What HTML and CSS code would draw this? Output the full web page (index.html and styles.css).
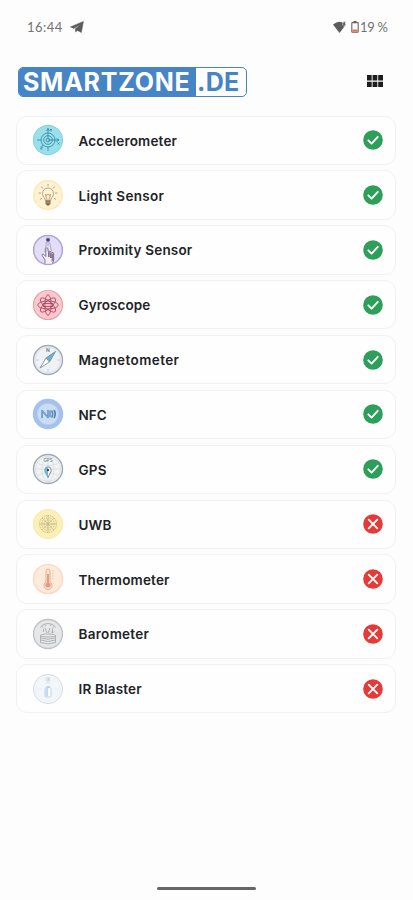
FILE: index.html
```html
<!DOCTYPE html>
<html lang="en">
<head>
<meta charset="utf-8">
<meta name="viewport" content="width=device-width, initial-scale=1">
<title>Sensors</title>
<link rel="stylesheet" href="styles.css">
</head>
<body>
<svg class="defs" aria-hidden="true">
  <symbol id="ok" viewBox="0 0 20 20"><circle cx="10" cy="10" r="9.8" fill="#2e9e5b"/><path d="M5.3 10.3 8.6 13.6 14.8 6.8" fill="none" stroke="#fff" stroke-width="1.8" stroke-linecap="round" stroke-linejoin="round"/></symbol>
  <symbol id="no" viewBox="0 0 20 20"><circle cx="10" cy="10" r="9.8" fill="#e53a37"/><path d="M5.7 5.7 14.3 14.3M14.3 5.7 5.7 14.3" fill="none" stroke="#fff" stroke-width="1.9" stroke-linecap="round"/></symbol>
</svg>
<div class="screen">
  <header class="status">
    <span class="clock">16:44</span>
    <svg class="plane" viewBox="0 0 14 12"><path d="M.4 5.900 13.400.4 11.400 11.600 7.400 9.400 5.700 11 5.200 8 10.300 3.400 3.800 7.400Z" fill="#5c5c5c" stroke="#5c5c5c" stroke-width=".5" stroke-linejoin="round"/></svg>
    <svg class="wifi" viewBox="0 0 14 12"><path d="M0 3.500Q6.500-2 13 3.500L6.500 12Z" fill="#5c5c5c"/><path d="M9.800 4.500V2.500Q10-.2 12.500.800V3.500L10.700 5.700" fill="#5c5c5c" stroke="#fdfdfd" stroke-width=".6"/></svg>
    <svg class="battery" viewBox="0 0 8 12"><path d="M2.500 0H5.500V1.500H2.500Z" fill="#5c5c5c"/><rect x=".8" y="1.600" width="6.400" height="9.600" rx=".7" fill="#fdfdfd" stroke="#666" stroke-width="1.100"/><path d="M1.400 8.600H6.600V10.700H1.400Z" fill="#ee6749"/></svg>
    <span class="percent">19 %</span>
  </header>
  <div class="topbar">
    <div class="logo"><span class="zone">SMARTZONE</span><span class="tld">.DE</span></div>
    <svg class="grid" viewBox="0 0 16 12"><path d="M0 0h4.700v5.500H0zM5.600 0h4.700v5.500H5.600zM11.200 0H16v5.500h-4.800zM0 6.700h4.700V12H0zM5.600 6.700h4.700V12H5.600zM11.200 6.700H16V12h-4.800z" fill="#1d1d20"/></svg>
  </div>
  <main class="list">
    <div class="card">
      <svg class="icon" viewBox="0 0 32 32"><circle cx="16" cy="16" r="14.700" fill="#98e0ea" stroke="#86cfe1"/><g fill="none" stroke="#3b87a4" stroke-width=".85"><circle cx="16" cy="16" r="7"/><circle cx="16" cy="16" r="4.300"/><circle cx="16" cy="16" r="1.800"/><path d="M5 16H9M16 16H27M16 4.500V14M16 23V27M11 21 9.500 22.500M24.500 14.500 27 16 24.500 17.500M14.500 7 16 4.500 17.500 7M18 5l1 1 1-1m-1 1v1.500M25.500 18.500l2 2m0-2-2 2M8.500 23h2l-2 2h2"/></g></svg>
      <span class="name t2">Accelerometer</span><svg class="state"><use href="#ok"/></svg>
    </div>
    <div class="card">
      <svg class="icon" viewBox="0 0 32 32"><circle cx="16" cy="16" r="14.300" fill="#fdf3d2" stroke="#f9e6a9" stroke-width="1.200"/><g fill="none" stroke="#a88a6c" stroke-width=".75"><path d="M13.300 21.500C13.300 19 10.500 18 10.500 14.500a5.500 5.500 0 0 1 11 0C21.500 18 18.700 19 18.700 21.500ZM15 21 13.500 15.500 15 16.500 16 15 17 16.500 18.500 15.500 17 21M16 5V7.500M9.500 7.500l1.300 2M22.500 7.500l-1.300 2M6.500 14H9M23 14h2.500M8 20.500l2-1.300M24 20.500l-2-1.300"/></g><path d="M13.500 21.500h5v3.500L16 27l-2.500-2Z" fill="#8b6b52"/><path d="M13.500 23.300h5" stroke="#d2b89a" stroke-width=".6"/></svg>
      <span class="name t3">Light Sensor</span><svg class="state"><use href="#ok"/></svg>
    </div>
    <div class="card">
      <svg class="icon" viewBox="0 0 32 32"><circle cx="16" cy="16" r="14.400" fill="#e3def5" stroke="#b1a3df" stroke-width="1.500"/><circle cx="16" cy="5.800" r="1.700" fill="#4b3d60" stroke="#75678f"/><path d="M14.500 8 12.800 18M17.500 8 19.500 17M16 8v4" stroke="#9b90b5" stroke-width=".7"/><path d="M13 29.500V26L10.200 21.500Q9.800 19.500 11.500 20.200L13.800 22.500V14.500Q15 13 16 14.500V17.500q1.300-1 2 .3 1.400-.7 2 .7 1.600-.3 1.700 1.200V26l-1.200 3.500" fill="#f1edf8" stroke="#6b5b7c" stroke-width=".8"/><path d="M16 18h1.800v5H16ZM18 18.500h1.800V24H18ZM20 19.500h1.500V26l-2 2Z" fill="#705a79" opacity=".8"/></svg>
      <span class="name t2">Proximity Sensor</span><svg class="state"><use href="#ok"/></svg>
    </div>
    <div class="card">
      <svg class="icon" viewBox="0 0 32 32"><circle cx="16" cy="16" r="14.500" fill="#f9c9cf" stroke="#e7a2a8" stroke-width="1.200"/><g fill="none" stroke="#a93d59" stroke-width=".8"><ellipse cx="16" cy="16" rx="3.200" ry="10.300"/><ellipse cx="16" cy="16" rx="10.300" ry="4"/><ellipse cx="16" cy="16" rx="3.700" ry="9.800" transform="rotate(48 16 16)"/><ellipse cx="16" cy="16" rx="3.700" ry="9.800" transform="rotate(-48 16 16)"/><path d="M11 14.500h10M11 17.500h10"/></g></svg>
      <span class="name t1">Gyroscope</span><svg class="state"><use href="#ok"/></svg>
    </div>
    <div class="card">
      <svg class="icon" viewBox="0 0 32 32"><circle cx="16" cy="16" r="14.500" fill="#eef1f5" stroke="#a3abb7" stroke-width="1.400"/><circle cx="16" cy="16" r="12.800" fill="none" stroke="#d5dae1" stroke-width=".6"/><path d="M4 16h3M25 16h3M16 25v3" stroke="#b9c0c9" stroke-width=".7"/><text class="micro" x="16" y="8">N</text><path d="m14 14 9.500-6.500L17.500 18Z" fill="#579fbd" stroke="#40647d" stroke-width=".6"/><path d="m14 14 3.500 4L8 24Z" fill="#fff" stroke="#747e8b" stroke-width=".8"/><path d="m14 14 3.500 4 6-10.500Z" fill="#8ac5d8" opacity=".5"/></svg>
      <span class="name t4">Magnetometer</span><svg class="state"><use href="#ok"/></svg>
    </div>
    <div class="card">
      <svg class="icon" viewBox="0 0 32 32"><circle cx="16" cy="16" r="15.200" fill="#a4c0ec"/><circle cx="16" cy="16" r="10.800" fill="#cbdcf3" stroke="#b0caec" stroke-width=".8"/><g fill="none" stroke-linecap="round" stroke-linejoin="round"><path d="M10 19.500V12.500l6 7v-7M18 13v5.500M20 13q1.500 3 0 6M22.300 12.500q2 3.500 0 7" stroke="#4e88b9" stroke-width="1.600"/><path d="M10 19.500V12.500l6 7v-7M18 13v5.500" stroke="#a6cdec" stroke-width=".55"/></g></svg>
      <span class="name">NFC</span><svg class="state"><use href="#ok"/></svg>
    </div>
    <div class="card">
      <svg class="icon" viewBox="0 0 32 32"><circle cx="16" cy="16" r="14.500" fill="#f1f3f4" stroke="#a2a9b5" stroke-width="1.400"/><g fill="none" stroke="#d2d7da" stroke-width=".6"><circle cx="16" cy="16" r="12.500"/><ellipse cx="16" cy="16" rx="6" ry="12.500"/><path d="M3.500 16h25M5.500 10.500q10.500 4 21 0M5.500 22q10.500-4 21 0M16 3.500v25"/></g><text class="micro gps" x="16" y="8.600">GPS</text><path d="M16 24.500C14.500 21 12.800 19.500 12.800 17a3.200 3.200 0 0 1 6.400 0c0 2.500-1.700 4-3.200 7.500Z" fill="#f4fbfc" stroke="#63747f" stroke-width=".8"/><path d="M16 24C14.500 21 13 19.500 13 17a3 3 0 0 1 3-3Z" fill="#69b9df"/><circle cx="16" cy="17" r="1.200" fill="#385465"/></svg>
      <span class="name t2">GPS</span><svg class="state"><use href="#ok"/></svg>
    </div>
    <div class="card">
      <svg class="icon" viewBox="0 0 32 32"><circle cx="16" cy="16" r="14.600" fill="#fdf0b7" stroke="#fbe5ad"/><g fill="none" stroke="#bcae7d" stroke-width=".8" stroke-dasharray="1.500 .7"><circle cx="16" cy="16" r="8.500"/><circle cx="16" cy="16" r="6.300"/><circle cx="16" cy="16" r="4.200"/><circle cx="16" cy="16" r="2"/><path d="M16 7.500v17M7.500 16h17M10 10l12 12M22 10 10 22"/></g></svg>
      <span class="name t2">UWB</span><svg class="state"><use href="#no"/></svg>
    </div>
    <div class="card">
      <svg class="icon" viewBox="0 0 32 32"><circle cx="16" cy="16" r="14.500" fill="#feeadb" stroke="#fad4b8" stroke-width="1.200"/><path d="M14 19V8q0-2 2-2t2 2v11a4 4 0 1 1-4 0Z" fill="#fce3d1" stroke="#d9a588" stroke-width=".8"/><path d="M16 11v10" stroke="#dc967c" stroke-width="1.700"/><circle cx="16" cy="22" r="2.600" fill="#e59b80"/><path d="M20 8h1.500M20 10.500h1.500M20 13h1.500M20 15.500h1.500" stroke="#e8bba1" stroke-width=".8"/></svg>
      <span class="name t2">Thermometer</span><svg class="state"><use href="#no"/></svg>
    </div>
    <div class="card">
      <svg class="icon" viewBox="0 0 32 32"><circle cx="16" cy="16" r="14.500" fill="#e5e7e8" stroke="#bfc2c5" stroke-width="1.300"/><g fill="none" stroke="#a7aaad" stroke-width=".85"><path d="M8.500 9.500Q10 6 16 5.500q6 .5 7.500 4M10 8.500l1.300 1M13 6.500l.5 1.500M19 6.500 18.500 8M22 8.500l-1.300 1M11.500 11v3M16 15l2-5M20.500 10.500V15M19 13.500l1.500 1.500 1.500-1.500M13 10l2 5"/><ellipse cx="16" cy="17.500" rx="7.500" ry="1.500"/><path d="M8.500 17.500v7q7.500 3 15 0v-7M8.500 19.800q7.500 3 15 0M8.500 22q7.500 3 15 0"/></g></svg>
      <span class="name t3">Barometer</span><svg class="state"><use href="#no"/></svg>
    </div>
    <div class="card">
      <svg class="icon" viewBox="0 0 32 32"><circle cx="16" cy="16" r="14.600" fill="#f4f7fa" stroke="#d5dae4"/><circle cx="16" cy="16" r="12" fill="none" stroke="#e7ecf1" stroke-width=".5"/><path d="M6 16h3M23 16h3M13 10.500q3-2 6 0" fill="none" stroke="#dce3ea" stroke-width=".7"/><circle cx="16" cy="6.500" r="1.900" fill="none" stroke="#cbd1d7" stroke-width=".7"/><path d="M15.200 5.500v2M16.500 7.500v-2q1.500.5 0 1l.7 1" fill="none" stroke="#b9c0c8" stroke-width=".5"/><path d="M14.500 13.200h3.500v1.500h-3.500z" fill="#b8c5d5"/><rect x="13" y="14.700" width="6" height="9.300" rx=".8" fill="#f9fcff" stroke="#bbcbdc" stroke-width=".8"/><path d="M13.300 15H16v8.700h-2.700Z" fill="#c0dbf5"/></svg>
      <span class="name t2">IR Blaster</span><svg class="state"><use href="#no"/></svg>
    </div>
  </main>
  <div class="home"></div>
</div>
</body>
</html>
```
FILE: styles.css
```css
* { box-sizing: border-box; }
body { margin: 0; background: #fdfdfd; color: #222326; font-family: Inter, sans-serif; }
.defs { display: none; }
.screen { width: 413px; height: 900px; display: flex; flex-direction: column; background: #fdfdfd; overflow: hidden; }
.status { height: 54px; padding: 0 26px 0 27px; display: flex; align-items: center; color: #737373; font: 400 13px/16px Lato, sans-serif; }
.clock { width: 36px; letter-spacing: .5px; white-space: nowrap; }
.plane { width: 14px; height: 12px; margin-left: 7px; }
.wifi { width: 14px; height: 12px; margin-left: auto; }
.battery { width: 8px; height: 12px; margin-left: 4px; }
.percent { width: 27px; margin-left: 1px; letter-spacing: -.3px; white-space: nowrap; }
.topbar { height: 61px; padding: 12.500px 30px 0 18px; display: flex; align-items: flex-start; justify-content: space-between; }
.logo { width: 229px; height: 30px; display: flex; border: 1px solid #4684c6; border-radius: 5px; overflow: hidden; background: #fdfdfd; font: 700 25px/29px Inter, sans-serif; white-space: nowrap; }
.zone { width: 177px; flex: none; padding-left: 4px; background: #4684c6; color: #fff; letter-spacing: .75px; }
.tld { padding-left: 1px; color: #4684c6; letter-spacing: .3px; }
.grid { width: 16px; height: 12px; margin-top: 8.500px; }
.list { padding: 0 17px 0 16px; display: grid; grid-auto-rows: 49.350px; row-gap: 5.500px; margin-top: .6px; }
.card { padding: 0 12px 0 14.500px; display: flex; align-items: center; border: 1px solid #f1f1f1; border-radius: 11px; background: #fefefe; }
.icon { width: 32px; height: 32px; flex: none; }
.name { margin: 1px 0 0 15px; font-size: 13.500px; font-weight: 600; line-height: 18px; white-space: nowrap; }
.t1 { letter-spacing: .05px; }
.t2 { letter-spacing: .18px; }
.t3 { letter-spacing: .3px; }
.t4 { letter-spacing: .42px; }
.state { width: 20px; height: 20px; margin-left: auto; flex: none; }
.micro { font: 700 5px Inter, sans-serif; text-anchor: middle; fill: #7b8796; }
.gps { font-size: 4.500px; font-weight: 500; }
.home { width: 99px; height: 3px; margin: auto auto 10px 157px; border-radius: 2px; background: #666; flex: none; }
```
